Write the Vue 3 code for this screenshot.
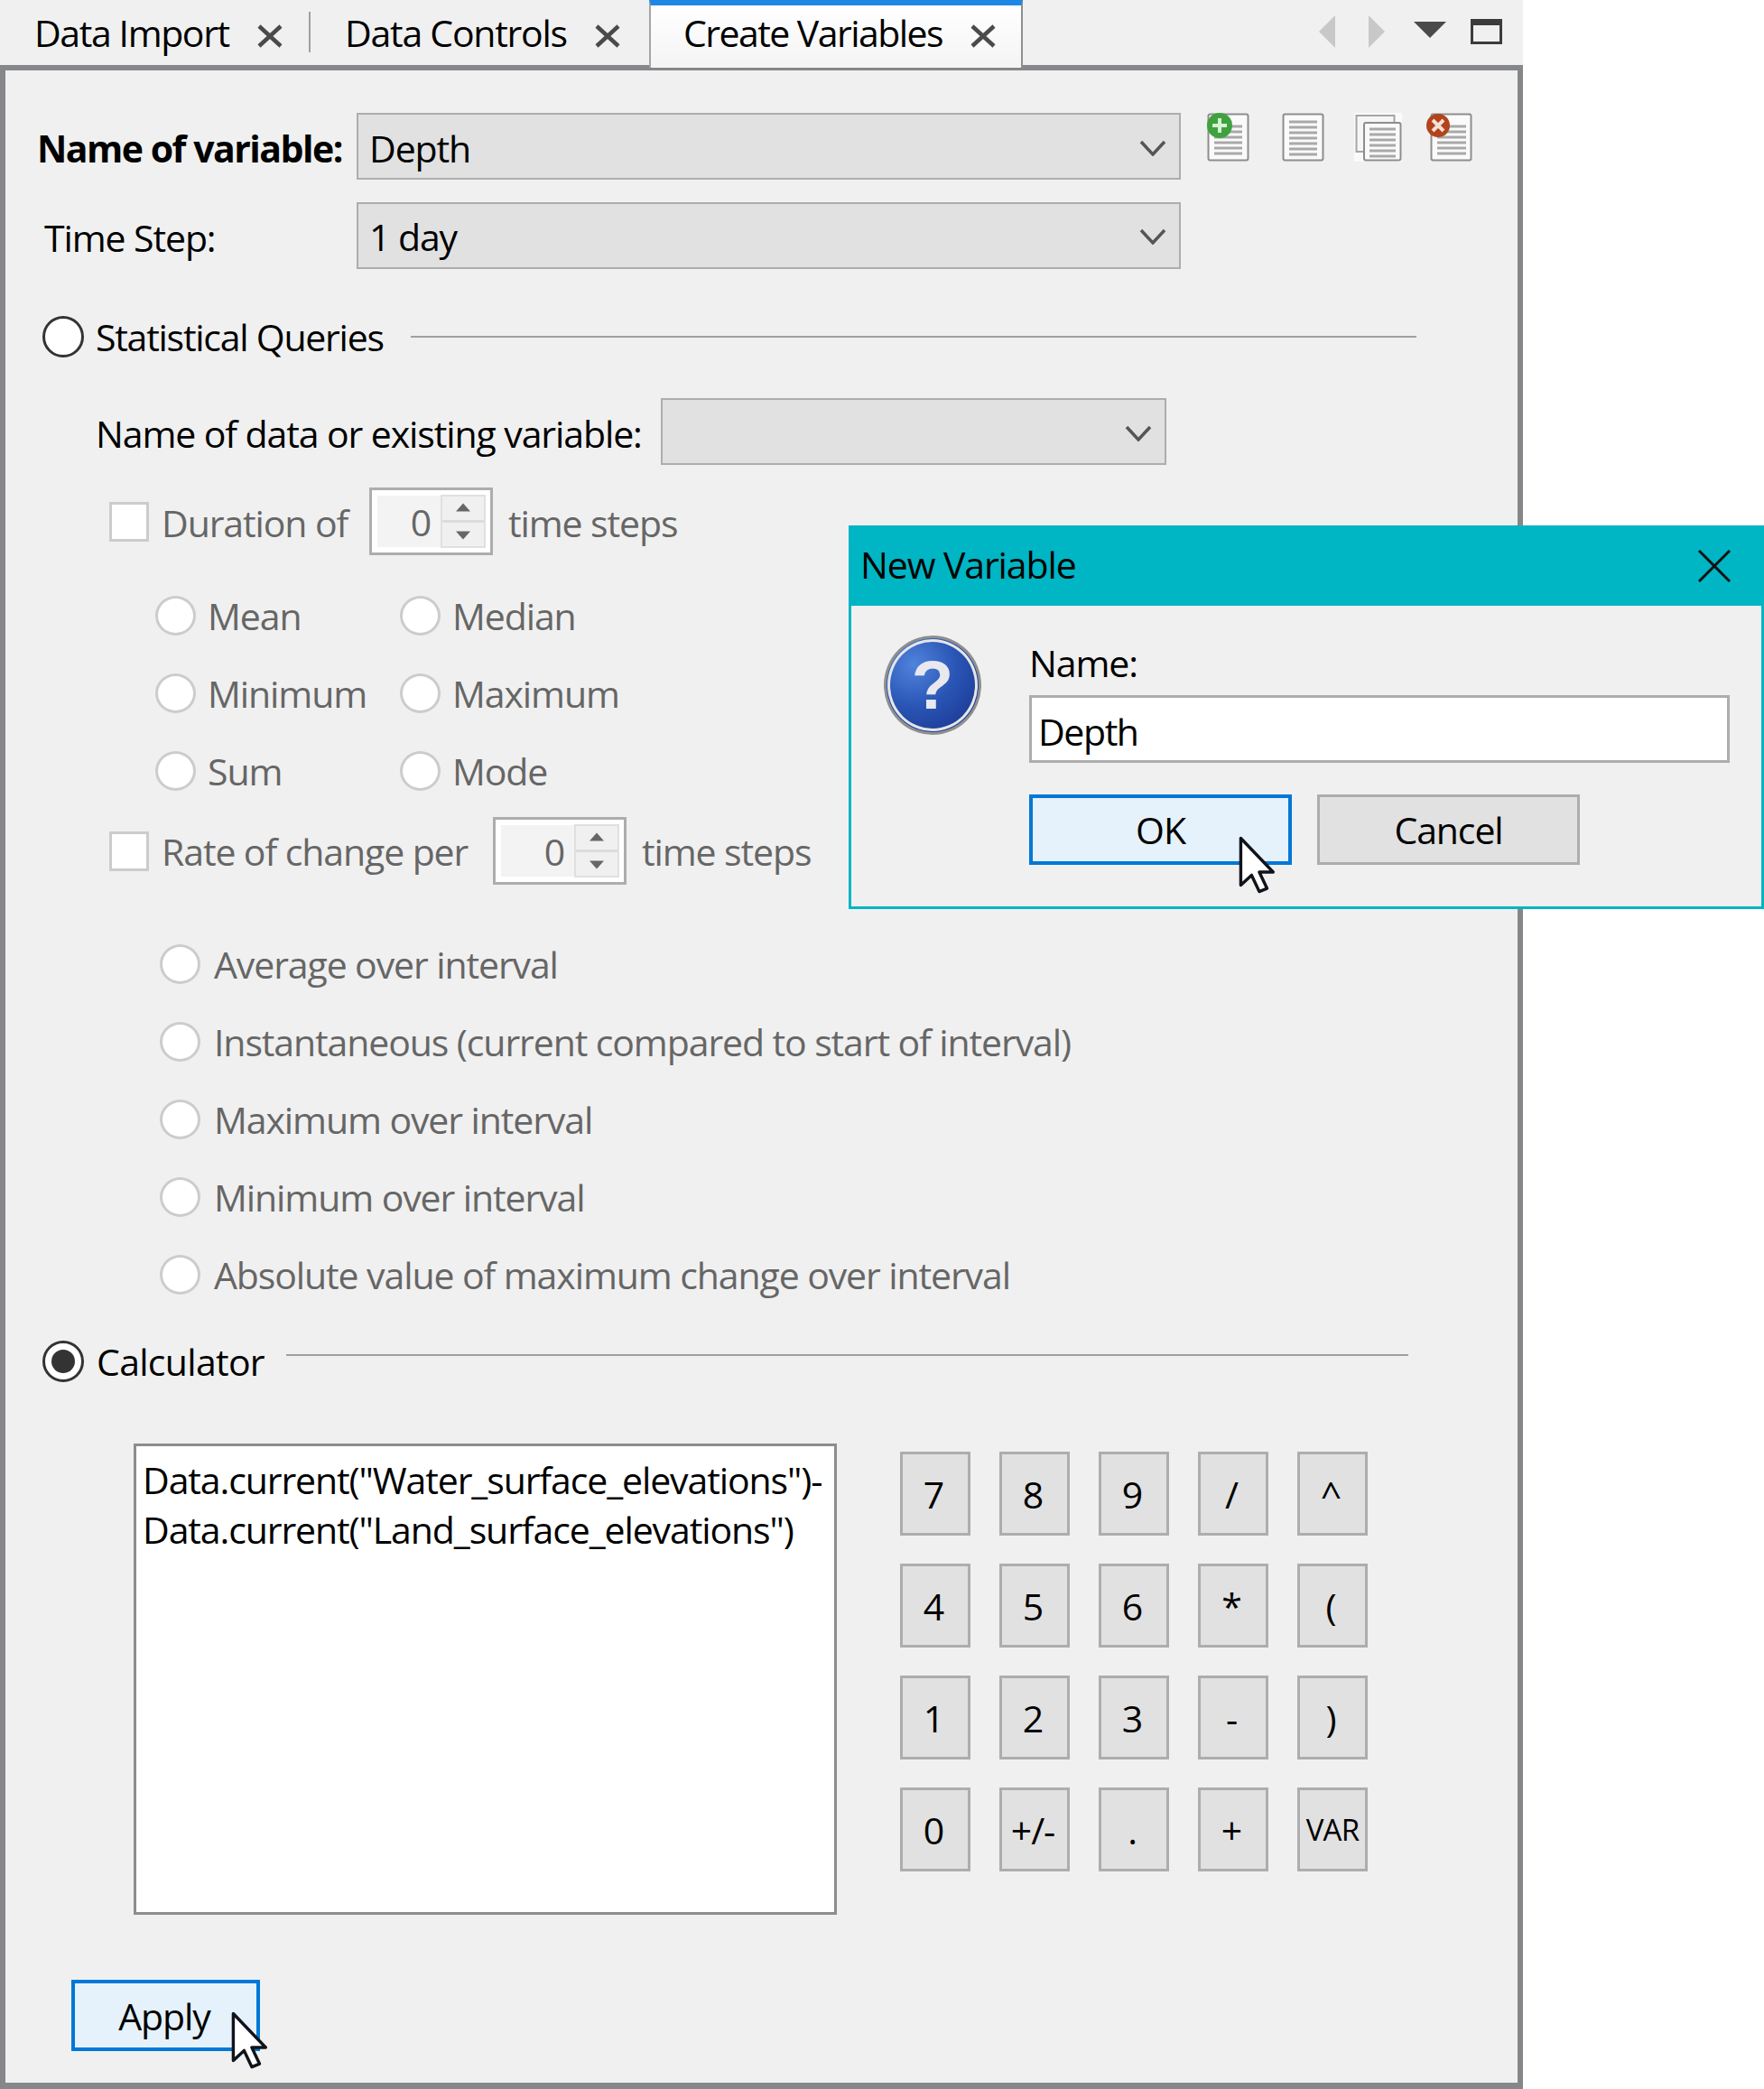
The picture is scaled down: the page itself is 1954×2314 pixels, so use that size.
<script setup>
const statsGrid = [
  ['Mean', 'Median'],
  ['Minimum', 'Maximum'],
  ['Sum', 'Mode'],
]
const intervals = [
  'Average over interval',
  'Instantaneous (current compared to start of interval)',
  'Maximum over interval',
  'Minimum over interval',
  'Absolute value of maximum change over interval',
]
const keys = ['7', '8', '9', '/', '^', '4', '5', '6', '*', '(', '1', '2', '3', '-', ')', '0', '+/-', '.', '+', 'VAR']
const docLines = [14, 20, 26, 32, 38, 44]
</script>

<template>
  <div class="page">
    <div class="view">
      <div class="tabbar">
        <div class="tab tab-first">
          <span>Data Import</span>
          <svg class="close" viewBox="0 0 30 26"><path d="M3 2 27 24M27 2 3 24" /></svg>
        </div>
        <div class="tabsep"></div>
        <div class="tab tab-second">
          <span>Data Controls</span>
          <svg class="close" viewBox="0 0 30 26"><path d="M3 2 27 24M27 2 3 24" /></svg>
        </div>
        <div class="tab tab-active">
          <span>Create Variables</span>
          <svg class="close" viewBox="0 0 30 26"><path d="M3 2 27 24M27 2 3 24" /></svg>
        </div>
        <div class="tabtools">
          <svg class="arrow" viewBox="0 0 18 36"><path d="M18 0V36L0 18Z" fill="#c8c8c8" /></svg>
          <svg class="arrow arrow-right" viewBox="0 0 18 36"><path d="M0 0V36L18 18Z" fill="#c8c8c8" /></svg>
          <svg class="menu" viewBox="0 0 36 18"><path d="M0 0H36L18 18Z" fill="#4a4a4a" /></svg>
          <svg class="max" viewBox="0 0 35 28"><rect x="1.5" y="1.5" width="32" height="25" fill="none" stroke="#3c3c3c" stroke-width="3" /><rect x="1" y="1" width="33" height="6" fill="#3c3c3c" /></svg>
        </div>
      </div>

      <div class="panel">
        <div class="row row-name">
          <label class="lbl-name">Name of variable:</label>
          <div class="select select-main">
            <span>Depth</span>
            <svg class="chev" viewBox="0 0 30 18"><path d="M2 2 15 16 28 2" /></svg>
          </div>
          <div class="doc-tools">
            <svg class="doc doc-add" viewBox="0 0 47 54">
              <rect x="1.5" y="1.5" width="44" height="51" rx="2" fill="#fafafa" stroke="#8d8d8d" stroke-width="2" />
              <path v-for="y in docLines" :key="y" :d="`M8 ${y + 1}H39`" stroke="#a9a9a9" stroke-width="3" />
              <circle cx="14" cy="14" r="14" fill="#3fa23f" />
              <path d="M14 6V22M6 14H22" stroke="#d7f2d0" stroke-width="4" />
            </svg>
            <svg class="doc doc-plain" viewBox="0 0 47 54">
              <rect x="1.5" y="1.5" width="44" height="51" rx="2" fill="#fafafa" stroke="#8d8d8d" stroke-width="2" />
              <path v-for="y in docLines" :key="y" :d="`M8 ${y - 4}H39`" stroke="#a9a9a9" stroke-width="3" />
              <path d="M8 46H39" stroke="#a9a9a9" stroke-width="3" />
            </svg>
            <svg class="doc doc-copy" viewBox="0 0 53 54">
              <rect x="0" y="0" width="53" height="54" fill="#fafafa" />
              <rect x="2.5" y="3" width="42" height="40" fill="#f6f6f6" stroke="#a5a5a5" stroke-width="2" />
              <rect x="11" y="11" width="40.5" height="41.5" rx="2" fill="#fafafa" stroke="#8d8d8d" stroke-width="2" />
              <path v-for="y in docLines" :key="y" :d="`M17 ${y + 4}H46`" stroke="#a9a9a9" stroke-width="3" />
            </svg>
            <svg class="doc doc-del" viewBox="0 0 52 54">
              <rect x="5.5" y="1.5" width="44" height="51" rx="2" fill="#fafafa" stroke="#8d8d8d" stroke-width="2" />
              <path v-for="y in docLines" :key="y" :d="`M12 ${y + 1}H44`" stroke="#a9a9a9" stroke-width="3" />
              <circle cx="13" cy="14" r="13" fill="#b2431c" />
              <path d="M7 8 19 20M19 8 7 20" stroke="#f6dfd6" stroke-width="4" />
            </svg>
          </div>
        </div>

        <div class="row row-step">
          <label class="lbl-step">Time Step:</label>
          <div class="select select-main">
            <span>1 day</span>
            <svg class="chev" viewBox="0 0 30 18"><path d="M2 2 15 16 28 2" /></svg>
          </div>
        </div>

        <div class="heading heading-stats">
          <span class="radio radio-on"></span>
          <span class="heading-text">Statistical Queries</span>
          <span class="rule rule-stats"></span>
        </div>

        <div class="row row-source">
          <label>Name of data or existing variable:</label>
          <div class="select select-source">
            <svg class="chev" viewBox="0 0 30 18"><path d="M2 2 15 16 28 2" /></svg>
          </div>
        </div>

        <div class="row row-duration off">
          <span class="check"></span>
          <span class="check-text">Duration of</span>
          <div class="spin spin-a">
            <span class="spin-value">0</span>
            <div class="spin-btns">
              <svg viewBox="0 0 16 9"><path d="M8 0 16 9H0Z" /></svg>
              <svg viewBox="0 0 16 9"><path d="M0 0H16L8 9Z" /></svg>
            </div>
          </div>
          <span class="after-spin">time steps</span>
        </div>

        <div class="stats-grid off">
          <template v-for="pair in statsGrid" :key="pair[0]">
            <div class="opt">
              <span class="radio radio-off"></span>
              <span>{{ pair[0] }}</span>
            </div>
            <div class="opt">
              <span class="radio radio-off"></span>
              <span>{{ pair[1] }}</span>
            </div>
          </template>
        </div>

        <div class="row row-rate off">
          <span class="check"></span>
          <span class="check-text">Rate of change per</span>
          <div class="spin spin-b">
            <span class="spin-value">0</span>
            <div class="spin-btns">
              <svg viewBox="0 0 16 9"><path d="M8 0 16 9H0Z" /></svg>
              <svg viewBox="0 0 16 9"><path d="M0 0H16L8 9Z" /></svg>
            </div>
          </div>
          <span class="after-spin">time steps</span>
        </div>

        <div class="interval-list off">
          <div v-for="item in intervals" :key="item" class="opt opt-wide">
            <span class="radio radio-off"></span>
            <span>{{ item }}</span>
          </div>
        </div>

        <div class="heading heading-calc">
          <span class="radio radio-on radio-checked"></span>
          <span class="heading-text">Calculator</span>
          <span class="rule rule-calc"></span>
        </div>

        <div class="calc">
          <div class="formula">Data.current("Water_surface_elevations")-<br />Data.current("Land_surface_elevations")</div>
          <div class="keypad">
            <div v-for="k in keys" :key="k" class="key" :class="{ 'key-var': k === 'VAR' }">{{ k }}</div>
          </div>
        </div>

        <div class="apply-wrap">
          <div class="btn btn-focus btn-apply">Apply</div>
          <svg class="cursor cursor-apply" viewBox="0 0 12 19" preserveAspectRatio="none"><path d="M1 1V16L4.5 12.8 7 18 9.5 17 7 11.8H11.5Z" /></svg>
        </div>
      </div>
    </div>

    <div class="dialog">
      <div class="dialog-title">
        <span>New Variable</span>
        <svg class="dialog-x" viewBox="0 0 36 36"><path d="M1 1 35 35M35 1 1 35" /></svg>
      </div>
      <div class="dialog-body">
        <div class="question">
          <span>?</span>
        </div>
        <div class="dialog-form">
          <div class="dialog-label">Name:</div>
          <div class="dialog-input">Depth</div>
          <div class="dialog-buttons">
            <div class="btn btn-focus btn-dialog">OK</div>
            <div class="btn btn-plain btn-dialog">Cancel</div>
          </div>
        </div>
      </div>
      <svg class="cursor cursor-ok" viewBox="0 0 12 19" preserveAspectRatio="none"><path d="M1 1V16L4.5 12.8 7 18 9.5 17 7 11.8H11.5Z" /></svg>
    </div>
  </div>
</template>

<style scoped>
.page {
  position: relative;
  width: 1954px;
  height: 2314px;
  background: #fff;
  overflow: hidden;
  font-family: "Open Sans", "Liberation Sans", sans-serif;
  font-size: 41px;
  line-height: 50px;
  letter-spacing: -1.1px;
  color: #000;
}
.view {
  width: 1687px;
  height: 2314px;
  background: #f0f0f0;
}
.tabbar {
  display: flex;
  height: 72px;
  align-items: stretch;
}
.tab {
  display: flex;
  align-items: center;
}
.tab-first {
  width: 342px;
  padding-left: 38px;
  box-sizing: border-box;
  gap: 30px;
  letter-spacing: -1.4px;
}
.tabsep {
  width: 2px;
  height: 45px;
  margin-top: 13px;
  background: #a0a0a0;
}
.tab-second {
  width: 375px;
  padding-left: 38px;
  box-sizing: border-box;
  gap: 30px;
  letter-spacing: -1.25px;
}
.tab-active {
  width: 414px;
  height: 75px;
  padding-left: 36px;
  padding-bottom: 9px;
  box-sizing: border-box;
  gap: 30px;
  letter-spacing: -1.55px;
  border-top: 6px solid #1e87e6;
  border-left: 2px solid #a5a5a5;
  border-right: 2px solid #8d8f92;
  background: linear-gradient(#fff, #f4f4f4);
  position: relative;
  z-index: 2;
}
.close {
  width: 30px;
  height: 26px;
  margin-top: 7px;
  flex: none;
}
.close path {
  fill: none;
  stroke: #4a4a4a;
  stroke-width: 4.5;
}
.tabtools {
  display: flex;
  align-items: center;
  padding-left: 328px;
  height: 70px;
}
.arrow {
  width: 18px;
  height: 36px;
  flex: none;
}
.arrow-right {
  margin-left: 37px;
}
.menu {
  width: 36px;
  height: 18px;
  margin-left: 32px;
  margin-top: -4px;
  flex: none;
}
.max {
  width: 35px;
  height: 28px;
  margin-left: 27px;
  flex: none;
}
.panel {
  box-sizing: border-box;
  height: 2242px;
  border: 6px solid #85878a;
  border-bottom-width: 7px;
  padding-top: 47px;
  position: relative;
}
.row {
  display: flex;
  align-items: center;
}
.row-name {
  height: 74px;
}
.lbl-name {
  width: 389px;
  padding-left: 35px;
  padding-top: 3px;
  box-sizing: border-box;
  font-weight: 700;
  letter-spacing: -1.5px;
  white-space: nowrap;
}
.lbl-step {
  width: 389px;
  padding-left: 43px;
  padding-top: 4px;
  box-sizing: border-box;
}
.row-step {
  height: 73px;
  margin-top: 25px;
}
.select {
  display: flex;
  align-items: center;
  justify-content: space-between;
  box-sizing: border-box;
  height: 74px;
  background: #e1e1e1;
  border: 2px solid #adadad;
  padding: 0 14px 0 12px;
  flex: none;
}
.select span {
  padding-top: 3px;
}
.select-main {
  width: 913px;
}
.select-source {
  width: 560px;
  justify-content: flex-end;
}
.chev {
  width: 30px;
  height: 18px;
  margin-top: 3px;
  flex: none;
}
.chev path {
  fill: none;
  stroke: #555;
  stroke-width: 3.5;
}
.doc-tools {
  position: relative;
  align-self: flex-start;
  display: flex;
  height: 54px;
  margin-left: 29px;
}
.doc {
  height: 54px;
  flex: none;
}
.doc-add {
  width: 47px;
}
.doc-plain {
  width: 47px;
  margin-left: 36px;
}
.doc-copy {
  width: 53px;
  margin-left: 33px;
}
.doc-del {
  width: 52px;
  margin-left: 27px;
}
.heading {
  display: flex;
  align-items: center;
  height: 46px;
  padding-left: 41px;
}
.heading-stats {
  margin-top: 53px;
}
.heading-text {
  margin-left: 13px;
  white-space: nowrap;
}
.heading-stats .heading-text {
  letter-spacing: -1.25px;
}
.heading-calc .heading-text {
  margin-left: 14px;
  letter-spacing: -0.7px;
}
.rule {
  height: 2px;
  background: #a0a0a0;
  display: block;
  flex: none;
}
.rule-stats {
  margin-left: 30px;
  width: 1114px;
}
.rule-calc {
  position: relative;
  top: -7px;
  margin-left: 24px;
  width: 1243px;
}
.radio {
  box-sizing: border-box;
  display: block;
  border-radius: 50%;
  background: #fff;
  flex: none;
}
.radio-on {
  width: 46px;
  height: 46px;
  border: 3px solid #333;
  position: relative;
}
.radio-checked::after {
  content: "";
  position: absolute;
  inset: 7px;
  border-radius: 50%;
  background: #333;
}
.radio-off {
  width: 45px;
  height: 44px;
  border: 3px solid #ccc;
}
.row-source {
  height: 74px;
  margin-top: 45px;
  padding-left: 100px;
}
.row-source label {
  width: 626px;
  padding-top: 3px;
  white-space: nowrap;
}
.off {
  color: #666;
}
.check {
  box-sizing: border-box;
  width: 44px;
  height: 44px;
  border: 3px solid #ccc;
  background: #fff;
  flex: none;
}
.check-text {
  margin-left: 14px;
  white-space: nowrap;
}
.row-duration {
  height: 75px;
  margin-top: 25px;
  padding-left: 115px;
}
.row-duration .check-text {
  width: 230px;
  padding-top: 3px;
}
.row-duration .after-spin {
  padding-top: 3px;
}
.row-rate {
  height: 75px;
  margin-top: 8px;
  padding-left: 115px;
}
.row-rate .check-text {
  width: 367px;
}
.spin {
  box-sizing: border-box;
  display: flex;
  justify-content: flex-end;
  align-items: center;
  height: 75px;
  border: 3px solid #adadad;
  background: linear-gradient(#f3f3f3, #f3f3f3) 6px 6px / calc(100% - 60px) calc(100% - 12px) no-repeat #fff;
  padding: 5px 5px;
  flex: none;
}
.spin-a {
  width: 137px;
}
.spin-b {
  width: 148px;
}
.spin-value {
  margin-right: 11px;
  color: #666;
  text-align: right;
}
.spin-btns {
  display: flex;
  flex-direction: column;
  align-items: center;
  justify-content: space-between;
  box-sizing: border-box;
  width: 50px;
  height: 59px;
  padding: 7px 0;
  background: linear-gradient(#f0f0f0 47%, #dcdcdc 47%, #dcdcdc 53%, #f0f0f0 53%);
  border: 2px solid #e0e0e0;
}
.spin-btns svg {
  width: 16px;
  height: 10px;
  fill: #666;
}
.after-spin {
  margin-left: 17px;
  white-space: nowrap;
}
.stats-grid {
  display: grid;
  grid-template-columns: 271px 300px;
  grid-auto-rows: 86px;
  margin-top: 24px;
  margin-left: 166px;
  height: 258px;
}
.opt {
  display: flex;
  align-items: center;
  gap: 13px;
  white-space: nowrap;
}
.interval-list {
  margin-top: 45px;
  margin-left: 171px;
}
.opt-wide {
  height: 86px;
  gap: 15px;
}
.heading-calc {
  margin-top: 30px;
}
.calc {
  display: flex;
  align-items: flex-start;
  margin-top: 68px;
  margin-left: 142px;
}
.formula {
  box-sizing: border-box;
  width: 779px;
  height: 522px;
  background: #fff;
  border: 3px solid #8b8d90;
  padding: 10px 7px;
  line-height: 55px;
  white-space: nowrap;
}
.keypad {
  display: grid;
  grid-template-columns: repeat(5, 78px);
  grid-auto-rows: 93px;
  column-gap: 32px;
  row-gap: 31px;
  margin-top: 9px;
  margin-left: 70px;
}
.key {
  display: flex;
  align-items: center;
  justify-content: center;
  box-sizing: border-box;
  background: #e1e1e1;
  border: 3px solid #adadad;
  padding-top: 1px;
  padding-right: 4px;
}
.key-var {
  font-size: 33px;
  letter-spacing: -0.8px;
  padding-right: 0;
}
.apply-wrap {
  position: relative;
  margin-top: 72px;
  margin-left: 73px;
  width: 209px;
}
.btn {
  display: flex;
  align-items: center;
  justify-content: center;
  box-sizing: border-box;
}
.btn-focus {
  background: #e5f1fb;
  border: 4px solid #0078d7;
}
.btn-plain {
  background: #e1e1e1;
  border: 3px solid #adadad;
}
.btn-apply {
  width: 209px;
  height: 79px;
  padding-right: 3px;
}
.cursor {
  position: absolute;
  width: 41px;
  height: 66px;
}
.cursor path {
  fill: #fff;
  stroke: #10131a;
  stroke-width: 1;
  stroke-linejoin: round;
}
.cursor-apply {
  left: 176px;
  top: 34px;
}
.dialog {
  position: absolute;
  left: 940px;
  top: 582px;
  width: 1014px;
  height: 425px;
  box-sizing: border-box;
  border: 3px solid #00b5c4;
  background: #f0f0f0;
}
.dialog-title {
  display: flex;
  align-items: center;
  justify-content: space-between;
  height: 89px;
  padding: 0 37px 3px 13px;
  box-sizing: border-box;
  margin: -3px -3px 0;
  background: #00b5c4;
}
.dialog-x {
  width: 36px;
  height: 36px;
  flex: none;
  margin-top: 3px;
}
.dialog-x path {
  fill: none;
  stroke: #111;
  stroke-width: 3;
}
.dialog-body {
  display: flex;
  align-items: flex-start;
  padding: 33px 0 0 36px;
}
.question {
  display: flex;
  align-items: center;
  justify-content: center;
  box-sizing: border-box;
  width: 108px;
  height: 110px;
  border-radius: 50%;
  border: 3px solid #8f8f8f;
  outline: 3px solid #e6e6e6;
  outline-offset: -7px;
  background: radial-gradient(circle at 30% 28%, #4f83dc 0%, #2a55b5 45%, #162f86 100%);
  flex: none;
}
.question span {
  font-family: "Liberation Sans", sans-serif;
  font-weight: 700;
  font-size: 76px;
  line-height: 76px;
  letter-spacing: 0;
  color: #e8e8ee;
}
.dialog-form {
  margin-left: 53px;
  width: 776px;
}
.dialog-label {
  height: 50px;
  margin-top: 5px;
}
.dialog-input {
  box-sizing: border-box;
  height: 75px;
  margin-top: 11px;
  background: #fff;
  border: 3px solid #adadad;
  padding: 12px 7px 6px;
  letter-spacing: -1.4px;
}
.dialog-buttons {
  display: flex;
  gap: 28px;
  margin-top: 35px;
}
.btn-dialog {
  width: 291px;
  height: 78px;
}
.cursor-ok {
  left: 428px;
  top: 340px;
}
</style>

<style>
html, body {
  margin: 0;
  background: #fff;
}
</style>
